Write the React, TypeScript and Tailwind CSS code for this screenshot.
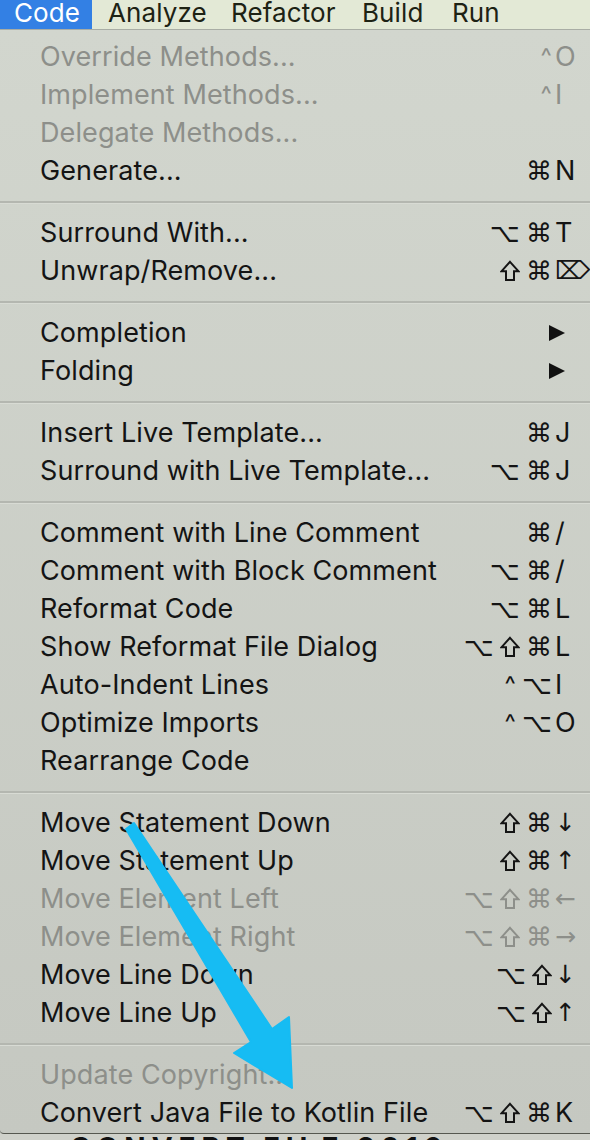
import React from 'react'

type Item =
  | { kind: 'sep' }
  | { kind: 'item'; label: string; mods?: string[]; key?: string; disabled?: boolean; submenu?: boolean }

const ITEMS: Item[] = [
  { kind: 'item', label: 'Override Methods...', mods: ['^'], key: 'O', disabled: true },
  { kind: 'item', label: 'Implement Methods...', mods: ['^'], key: 'I', disabled: true },
  { kind: 'item', label: 'Delegate Methods...', disabled: true },
  { kind: 'item', label: 'Generate...', mods: ['⌘'], key: 'N' },
  { kind: 'sep' },
  { kind: 'item', label: 'Surround With...', mods: ['⌥', '⌘'], key: 'T' },
  { kind: 'item', label: 'Unwrap/Remove...', mods: ['⇧', '⌘'], key: '⌦' },
  { kind: 'sep' },
  { kind: 'item', label: 'Completion', submenu: true },
  { kind: 'item', label: 'Folding', submenu: true },
  { kind: 'sep' },
  { kind: 'item', label: 'Insert Live Template...', mods: ['⌘'], key: 'J' },
  { kind: 'item', label: 'Surround with Live Template...', mods: ['⌥', '⌘'], key: 'J' },
  { kind: 'sep' },
  { kind: 'item', label: 'Comment with Line Comment', mods: ['⌘'], key: '/' },
  { kind: 'item', label: 'Comment with Block Comment', mods: ['⌥', '⌘'], key: '/' },
  { kind: 'item', label: 'Reformat Code', mods: ['⌥', '⌘'], key: 'L' },
  { kind: 'item', label: 'Show Reformat File Dialog', mods: ['⌥', '⇧', '⌘'], key: 'L' },
  { kind: 'item', label: 'Auto-Indent Lines', mods: ['^', '⌥'], key: 'I' },
  { kind: 'item', label: 'Optimize Imports', mods: ['^', '⌥'], key: 'O' },
  { kind: 'item', label: 'Rearrange Code' },
  { kind: 'sep' },
  { kind: 'item', label: 'Move Statement Down', mods: ['⇧', '⌘'], key: '↓' },
  { kind: 'item', label: 'Move Statement Up', mods: ['⇧', '⌘'], key: '↑' },
  { kind: 'item', label: 'Move Element Left', mods: ['⌥', '⇧', '⌘'], key: '←', disabled: true },
  { kind: 'item', label: 'Move Element Right', mods: ['⌥', '⇧', '⌘'], key: '→', disabled: true },
  { kind: 'item', label: 'Move Line Down', mods: ['⌥', '⇧'], key: '↓' },
  { kind: 'item', label: 'Move Line Up', mods: ['⌥', '⇧'], key: '↑' },
  { kind: 'sep' },
  { kind: 'item', label: 'Update Copyright...', disabled: true },
  { kind: 'item', label: 'Convert Java File to Kotlin File', mods: ['⌥', '⇧', '⌘'], key: 'K' },
]

const SYMBOL_FONT = "font-['DejaVu_Sans',sans-serif]"

// outlined shift arrow, the DejaVu glyph is too thin
function ShiftIcon() {
  return (
    <svg width="20" height="22" viewBox="0 0 20 22" className="block">
      <path d="M10 1.8 L18.4 11.2 H14 V20 H6 V11.2 H1.6 Z" fill="none" stroke="currentColor" strokeWidth="2" strokeLinejoin="miter" />
    </svg>
  )
}

function MenuRow({ item }: { item: Extract<Item, { kind: 'item' }> }) {
  const color = item.disabled ? 'text-[#8d8f8a]' : 'text-[#141414]'
  const symbolKey = item.key ? /[⌦↓↑←→]/.test(item.key) : false
  return (
    <div className={`flex h-[38px] items-center pl-[40px] ${color}`}>
      <span className="flex-1 whitespace-nowrap">{item.label}</span>
      {item.submenu ? (
        <span className="w-[42px] leading-none">
          <svg width="18" height="18" viewBox="0 0 18 18">
            <path d="M1 1 L17 9 L1 17 Z" fill="#111" />
          </svg>
        </span>
      ) : (
        <>
          <span className={`flex items-center gap-[6px] text-[26px] ${SYMBOL_FONT}`}>
            {(item.mods ?? []).map((m, i) =>
              m === '⇧' ? (
                <ShiftIcon key={i} />
              ) : (
                <span key={i} className={m === '^' ? "font-['Inter',sans-serif] text-[24px]" : ''}>
                  {m}
                </span>
              )
            )}
          </span>
          <span className={`w-[38px] pl-[3px] ${symbolKey ? `${SYMBOL_FONT} text-[25px]` : ''}`}>
            {item.key}
          </span>
        </>
      )}
    </div>
  )
}

export default function App() {
  return (
    <div className="relative w-[590px] h-[1140px] overflow-hidden bg-[#c9ccc5] font-['Inter','Liberation_Sans',sans-serif] text-[27px] tracking-[0.1px]">
      {/* Menu bar */}
      <div className="flex h-[30px] bg-[#e3e9d6] border-b border-[#a9ada5] leading-none text-[#1d2214] text-[26px]">
        <div className="bg-[#3380e4] text-white w-[92px] pl-[14px]">Code</div>
        <div className="pl-[16px] w-[123px]">Analyze</div>
        <div className="pl-[16px] w-[130px]">Refactor</div>
        <div className="pl-[17px] w-[90px]">Build</div>
        <div className="pl-[17px]">Run</div>
      </div>

      {/* Dropdown */}
      <div className="pt-[8px] pb-[1px] bg-gradient-to-b from-[#d2d6ce] to-[#c5c8c1] border-b border-[#55574f] rounded-bl-[4px]">
        {ITEMS.map((item, i) =>
          item.kind === 'sep' ? (
            <div key={i} className="h-[24px] flex items-center">
              <div className="w-full h-[3px] bg-[#b4b7b0] border-b border-[#d8dbd4]" />
            </div>
          ) : (
            <MenuRow key={i} item={item} />
          )
        )}
      </div>

      {/* Content peeking below the menu */}
      <div className="h-[6px] overflow-hidden bg-[#cfd1ca]">
        <div className="pl-[70px] font-bold text-[28px] leading-[28px] tracking-[6px] text-[#111]">CONVERT FILE 2016</div>
      </div>

      {/* Annotation arrow */}
      <svg className="absolute left-0 top-0 pointer-events-none" width="590" height="1140" viewBox="0 0 590 1140">
        <polygon
          points="126,829 134,823 272,1029 289,1017 292,1088 234,1053 251,1042"
          fill="#16bcf3"
          strokeLinejoin="round"
          stroke="#16bcf3"
          strokeWidth="2"
        />
      </svg>
    </div>
  )
}
